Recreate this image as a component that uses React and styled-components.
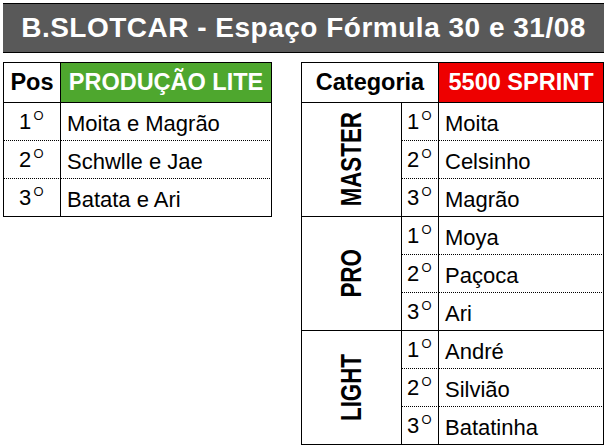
import React from 'react'
import styled, { createGlobalStyle } from 'styled-components'

const GlobalStyle = createGlobalStyle`
  html, body {
    margin: 0;
    padding: 0;
    background: #ffffff;
  }
  body {
    font-family: "Liberation Sans", Arial, sans-serif;
    color: #000;
  }
`

const lite = ['Moita e Magrão', 'Schwlle e Jae', 'Batata e Ari']

const sprint = [
  { name: 'MASTER', drivers: ['Moita', 'Celsinho', 'Magrão'] },
  { name: 'PRO', drivers: ['Moya', 'Paçoca', 'Ari'] },
  { name: 'LIGHT', drivers: ['André', 'Silvião', 'Batatinha'] },
]

function App() {
  return (
    <Page>
      <GlobalStyle />
      <TitleBar>B.SLOTCAR - Espaço Fórmula 30 e 31/08</TitleBar>
      <Tables>
        <LiteTable>
          <HeadCell>Pos</HeadCell>
          <HeadCell $bg="#4ea72e" $color="#fff">PRODUÇÃO LITE</HeadCell>
          {lite.map((name, i) => (
            <React.Fragment key={name}>
              <PosCell $last={i === lite.length - 1}>
                <span>
                  {i + 1}
                  <Ord>º</Ord>
                </span>
              </PosCell>
              <NameCell $last={i === lite.length - 1}>{name}</NameCell>
            </React.Fragment>
          ))}
        </LiteTable>

        <SprintTable>
          <HeadCell $span={2}>Categoria</HeadCell>
          <HeadCell $bg="#ee0000" $color="#fff">5500 SPRINT</HeadCell>
          {sprint.map((group) => (
            <React.Fragment key={group.name}>
              <CategoryCell>
                <Vertical>{group.name}</Vertical>
              </CategoryCell>
              {group.drivers.map((d, i) => (
                <React.Fragment key={d}>
                  <PosCell $last={i === 2}>
                    <span>
                      {i + 1}
                      <Ord>º</Ord>
                    </span>
                  </PosCell>
                  <NameCell $last={i === 2}>{d}</NameCell>
                </React.Fragment>
              ))}
            </React.Fragment>
          ))}
        </SprintTable>
      </Tables>
    </Page>
  )
}

export default App

const Page = styled.div`
  padding: 3px 3px 0 3px;
  width: 601px;
`

const TitleBar = styled.div`
  height: 48px;
  background: #595959;
  border-top: 1px solid #000;
  border-bottom: 1px solid #000;
  color: #fff;
  font-weight: 700;
  font-size: 28px;
  letter-spacing: 0.5px;
  display: flex;
  align-items: center;
  justify-content: center;
  box-sizing: content-box;
`

const Tables = styled.div`
  display: flex;
  align-items: flex-start;
  gap: 29px;
  margin-top: 9px;
`

const Grid = styled.div`
  display: grid;
  border-top: 1px solid #000;
  border-left: 1px solid #000;
  grid-auto-rows: 38px;
`

const LiteTable = styled(Grid)`
  grid-template-columns: 57px 211px;
  grid-template-rows: 40px;
`

const SprintTable = styled(Grid)`
  grid-template-columns: 100px 37px 165px;
  grid-template-rows: 40px;
`

const Cell = styled.div`
  box-sizing: border-box;
  border-right: 1px solid #000;
  border-bottom: 1px ${(p) => (p.$last ? 'solid' : 'dotted')} #000;
  display: flex;
  align-items: flex-end;
  padding-bottom: 3px;
  font-size: 22px;
  white-space: nowrap;
`

const HeadCell = styled(Cell)`
  grid-column: span ${(p) => p.$span || 1};
  border-bottom: 1px solid #000;
  justify-content: center;
  align-items: center;
  padding-bottom: 0;
  font-weight: 700;
  font-size: 23.5px;
  background: ${(p) => p.$bg || '#fff'};
  color: ${(p) => p.$color || '#000'};
`

const PosCell = styled(Cell)`
  justify-content: center;
`

const Ord = styled.span`
  font-family: Lato, sans-serif;
  font-weight: 300;
  font-size: 31px;
  line-height: 1;
  vertical-align: -4px;
  margin-left: 1px;
`

const NameCell = styled(Cell)`
  padding-left: 6px;
`

const CategoryCell = styled.div`
  grid-row: span 3;
  box-sizing: border-box;
  border-right: 1px solid #000;
  border-bottom: 1px solid #000;
  display: flex;
  align-items: center;
  justify-content: center;
`

const Vertical = styled.span`
  writing-mode: vertical-rl;
  transform: rotate(180deg) scaleY(0.77);
  font-weight: 700;
  font-size: 29px;
  line-height: 1;
`
